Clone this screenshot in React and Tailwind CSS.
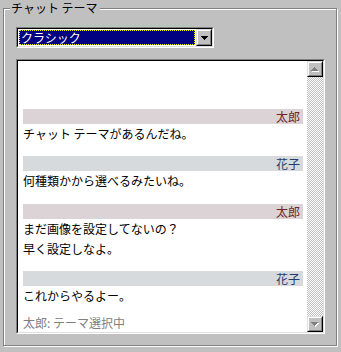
import React from "react";

function Raised({ className = "", children }) {
  return (
    <div className={"flex border border-t-[#dfdfdf] border-l-[#dfdfdf] border-r-black border-b-black " + className}>
      <div className="flex-1 flex items-center justify-center bg-[#c0c0c0] border border-t-white border-l-white border-r-[#808080] border-b-[#808080]">
        {children}
      </div>
    </div>
  );
}

function ArrowDownBlack() {
  return (
    <svg width="7" height="4" viewBox="0 0 7 4" shapeRendering="crispEdges">
      <rect x="0" y="0" width="7" height="1" fill="#000" />
      <rect x="1" y="1" width="5" height="1" fill="#000" />
      <rect x="2" y="2" width="3" height="1" fill="#000" />
      <rect x="3" y="3" width="1" height="1" fill="#000" />
    </svg>
  );
}

function ArrowUpDisabled() {
  return (
    <svg width="8" height="5" viewBox="0 0 8 5" shapeRendering="crispEdges">
      <rect x="4" y="1" width="1" height="1" fill="#fff" />
      <rect x="3" y="2" width="3" height="1" fill="#fff" />
      <rect x="2" y="3" width="5" height="1" fill="#fff" />
      <rect x="1" y="4" width="7" height="1" fill="#fff" />
      <rect x="3" y="0" width="1" height="1" fill="#808080" />
      <rect x="2" y="1" width="3" height="1" fill="#808080" />
      <rect x="1" y="2" width="5" height="1" fill="#808080" />
      <rect x="0" y="3" width="7" height="1" fill="#808080" />
    </svg>
  );
}

function ArrowDownDisabled() {
  return (
    <svg width="8" height="5" viewBox="0 0 8 5" shapeRendering="crispEdges">
      <rect x="1" y="1" width="7" height="1" fill="#fff" />
      <rect x="2" y="2" width="5" height="1" fill="#fff" />
      <rect x="3" y="3" width="3" height="1" fill="#fff" />
      <rect x="4" y="4" width="1" height="1" fill="#fff" />
      <rect x="0" y="0" width="7" height="1" fill="#808080" />
      <rect x="1" y="1" width="5" height="1" fill="#808080" />
      <rect x="2" y="2" width="3" height="1" fill="#808080" />
      <rect x="3" y="3" width="1" height="1" fill="#808080" />
    </svg>
  );
}

function NameBar({ who }) {
  if (who === "taro") {
    return (
      <div className="h-[15px] bg-[#dcd3d6] text-[#6e2626] text-right pr-[3px] leading-[15px]">太郎</div>
    );
  }
  return (
    <div className="h-[15px] bg-[#d6dadd] text-[#243a6c] text-right pr-[3px] leading-[15px]">花子</div>
  );
}

export default function App() {
  return (
    <div className="w-[341px] h-[352px] bg-[#c0c0c0] pt-[8px] pl-[3px] font-['Noto_Sans_CJK_JP',sans-serif] text-[12px] text-black overflow-hidden">
      <div className="relative w-[334px] h-[338px] border border-[#808080] shadow-[inset_1px_1px_0_#fff,1px_1px_0_#fff] pl-[12px] pt-[18px]">
        <div className="absolute left-[6px] top-[-8px] pl-[1px] pr-[2px] bg-[#c0c0c0] leading-[14px]">チャット テーマ</div>

        <div className="w-[198px] h-[21px] flex border border-t-[#808080] border-l-[#808080] border-r-white border-b-white">
          <div className="flex-1 flex border border-t-black border-l-black border-r-[#dfdfdf] border-b-[#dfdfdf] bg-white">
            <div className="flex-1 m-[1px] bg-[#000080] border border-dotted border-[#ffff00] text-white leading-[13px] pl-[1px]">クラシック</div>
            <Raised className="w-[16px] h-[17px]">
              <ArrowDownBlack />
            </Raised>
          </div>
        </div>

        <div className="mt-[11px] w-[309px] h-[275px] flex border border-t-[#808080] border-l-[#808080] border-r-white border-b-white">
          <div className="flex-1 flex border border-t-black border-l-black border-r-[#dfdfdf] border-b-[#dfdfdf] bg-white">
            <div className="flex-1 flex flex-col pt-[48px] pl-[5px] pr-[4px] overflow-hidden">
              <NameBar who="taro" />
              <div className="leading-[20px]">チャット テーマがあるんだね。</div>
              <div className="mt-[12px]">
                <NameBar who="hanako" />
              </div>
              <div className="leading-[20px]">何種類かから選べるみたいね。</div>
              <div className="mt-[13px]">
                <NameBar who="taro" />
              </div>
              <div className="leading-[20px]">まだ画像を設定してないの？</div>
              <div className="leading-[20px]">早く設定しなよ。</div>
              <div className="mt-[12px]">
                <NameBar who="hanako" />
              </div>
              <div className="leading-[20px]">これからやるよー。</div>
              <div className="mt-[7px] leading-[20px] text-[#808080]">太郎: テーマ選択中</div>
            </div>
            <div className="w-[16px] flex flex-col">
              <Raised className="w-[16px] h-[16px]">
                <ArrowUpDisabled />
              </Raised>
              <div className="flex-1 bg-[repeating-conic-gradient(#c0c0c0_0%_25%,#ffffff_0%_50%)] bg-[length:2px_2px]" />
              <Raised className="w-[16px] h-[16px]">
                <ArrowDownDisabled />
              </Raised>
            </div>
          </div>
        </div>
      </div>
    </div>
  );
}
